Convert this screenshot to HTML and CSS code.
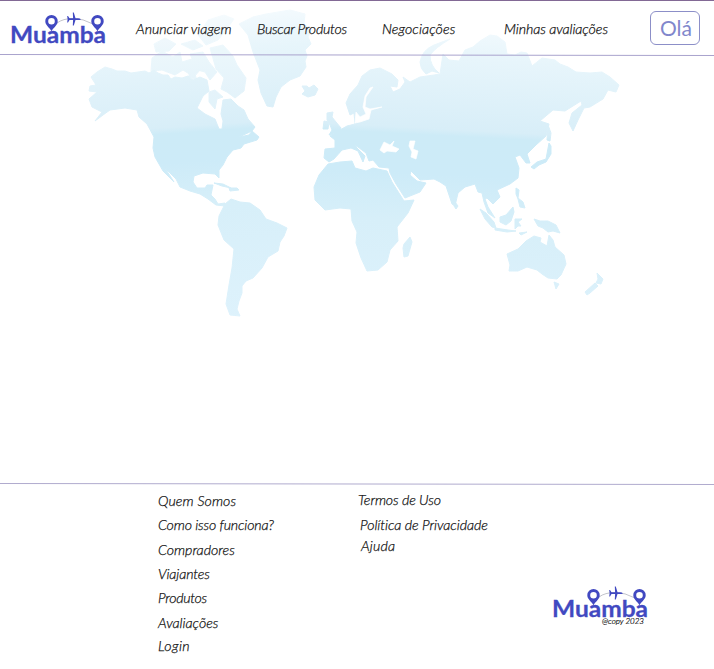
FILE: index.html
```html
<!DOCTYPE html>
<html lang="pt-BR">
<head>
<meta charset="utf-8">
<title>Muamba</title>
<link rel="stylesheet" href="styles.css">
</head>
<body>
<svg class="defs" width="0" height="0" aria-hidden="true">
  <symbol id="logo" viewBox="0 0 100 38" overflow="visible">
    <text class="wordmark" x="1" y="33" textLength="96" lengthAdjust="spacingAndGlyphs">Muamba</text>
    <path class="route" d="M48 13Q54 8.500 64 8.500T84 14"/>
    <path class="mark" fill-rule="evenodd" d="M42.500 5a6.200 6.200 0 0 1 6.200 6.200c0 4-4 6-6.200 10-2.200-4-6.200-6-6.200-10A6.200 6.200 0 0 1 42.500 5zm0 2.900a3.300 3.300 0 1 0 0 6.600 3.300 3.300 0 0 0 0-6.600zM88.500 5a6.200 6.200 0 0 1 6.200 6.200c0 4-4 6-6.200 10-2.200-4-6.200-6-6.200-10A6.200 6.200 0 0 1 88.500 5zm0 2.900a3.300 3.300 0 1 0 0 6.600 3.300 3.300 0 0 0 0-6.600z"/>
    <path class="mark" d="M72 9.200q-1-.9-3-.9h-2.500L64.800 2.500h-1l.3 5.800h-3.600L59 6h-.8l.4 3.200-.4 3.200h.8l1.500-2.300h3.600l-.3 5.400h1l1.700-5.400H69q2 0 3-.9z"/>
  </symbol>
</svg>

<div class="page">
  <svg class="map" viewBox="0 0 714 340" aria-hidden="true">
    <defs>
      <linearGradient id="west" gradientUnits="userSpaceOnUse" x1="0" y1="20" x2="22" y2="340">
        <stop offset="0" stop-color="#f6fbfe"/>
        <stop offset=".14" stop-color="#e7f5fb"/>
        <stop offset=".37" stop-color="#d8eef8"/>
        <stop offset=".39" stop-color="#cdebf7"/>
        <stop offset=".48" stop-color="#cdebf8"/>
        <stop offset=".62" stop-color="#d7eff9"/>
        <stop offset="1" stop-color="#def2fc"/>
      </linearGradient>
      <linearGradient id="east" gradientUnits="userSpaceOnUse" x1="350" y1="8" x2="333" y2="330">
        <stop offset="0" stop-color="#f6fbfe"/>
        <stop offset=".14" stop-color="#e7f5fb"/>
        <stop offset=".36" stop-color="#d8eef8"/>
        <stop offset=".38" stop-color="#cdebf7"/>
        <stop offset=".5" stop-color="#cdebf8"/>
        <stop offset=".65" stop-color="#d7eff9"/>
        <stop offset="1" stop-color="#def2fc"/>
      </linearGradient>
    </defs>
    <g class="west">
      <path d="M91 77L97 72 105 67 112 69 117 71 125 71 131 73 138 72 145 71 149 73 154 70 158 73 163 75 168 75 171 79 175 77 182 78 188 76 193 80 200 77 207 80 209 91 203 96 197 108 205 114 215 119 219 129 222 129 223 121 221 114 223 100 231 99 238 106 244 110 248 119 255 127 252 131 239 137 249 135 252 131 259 137 257 140 244 144 241 148 233 150 227 157 223 165 219 170 219 178 215 174 203 173 194 176 193 182 197 188 205 188 207 185 213 185 211 195 215 199 218 204 225 203 225 206 216 205 208 199 200 194 190 191 180 187 176 179 165 168 174 182 163 171 155 157 153 148 154 137 147 124 139 117 137 110 125 108 110 110 103 115 95 121 102 112 92 107 89 99 97 92 89 91 90 86 96 85z"/>
      <path d="M152 58l10-7 11 6 7-5 2 10 10-3 8 11-6 7-11-7-8 5-13-5-11 1zM190 54l13-2 6 10 8 10-7 8-5-8-8-2zM210 48l13-3 10 11 4 9 9 13-2 13-9 7-8-6-6-3 3-11-8-9zM154 44l11-6 11 6-7 7-13 1zM181 44l14-4 8 6-10 4zM198 35l10-15 16-5 10 4-8 11-8 10-12 5zM189 64l5 8 3 8-8-3zM209 92l6-2 8 7-6 2-2 10-6-7z" opacity=".8"/>
      <path d="M239 24L253 17 266 14 290 10 305 14 304 24 311 30 308 37 311 44 305 50 307 56 305 61 306 67 300 76 290 80 281 87 276 97 273 107 267 106 261 93 258 80 260 70 253 52 248 35z"/>
      <path d="M302 86l5 0 2 2 5-3 4 4-3 6-7 2-6-3 3-3zM214 183l9 1 8 4-9-2zM229 188l8 0 2 2-9 1z"/>
      <path d="M225 204L231 199 240 202 250 203 260 210 266 219 277 223 287 228 284 236 280 242 278 251 268 257 262 268 253 278 246 281 242 286 242 293 239 301 237 309 240 316 230 315 226 304 229 285 232 268 234 249 224 240 218 225 219 216z"/>
    </g>
    <g class="east">
      <path d="M327 113l6-1-1 5 4 5 5 6-1 4-11 3 3-5-2-5-3-5zM324 121l5 1-1 7-5 0z"/>
      <path d="M346 103L350 94 358 85 362 76 370 70 380 68 392 74 398 80 397 87 390 86 393 92 400 89 405 82 403 77 410 82 420 77 434 75 440 74 443 54 449 60 459 61 465 50 473 47 480 41 490 35 497 36 505 42 507 54 515 55 521 52 527 53 532 66 542 58 555 60 560 64 568 67 576 72 590 73 602 72 610 77 619 85 616 92 608 90 603 99 590 107 584 108 578 120 573 131 569 123 572 113 582 105 581 101 565 111 553 110 540 121 549 124 546 136 536 145 527 154 530 163 526 163 520 155 515 157 519 168 518 178 510 184 497 190 500 197 493 204 487 198 485 199 488 207 495 218 488 213 484 202 482 193 478 192 475 184 465 187 458 193 455 206 452 204 446 186 440 182 434 179 420 180 411 171 410 175 417 181 426 183 420 192 405 198 396 184 390 173 389 168 379 167 373 160 369 161 366 153 358 147 354 145 365 156 363 162 358 151 351 148 342 150 334 159 329 162 324 158 325 149 335 148 335 140 330 136 340 130 347 126 355 124 354 113 350 115z"/>
      <path d="M328 164L340 162 352 161 355 168 366 171 373 168 387 171 392 182 404 201 414 200 408 213 397 227 398 241 390 250 387 262 378 270 367 271 361 258 356 243 357 232 352 221 351 209 340 208 325 210 315 200 314 187 319 175z"/>
      <path d="M410 237l2 5-4 14-4 1-1-9 1-4zM455 202l3 4-2 3-2-3z"/>
      <path d="M420 62q2-12 14-17l16-6q-15 9-20 16 0 11 9 18l-7-2-6 3q-6-5-6-12z"/>
      <path d="M548 125l3 8-1 8-3-1zM549 143l2 3 0 8-5 8-7 3-5 4-3-2 6-5 9-3zM516 188l3 2-1 8 5 4 2 6-5-1-2-8-2-5zM480 209l6 4 8 9 2 6-4-1-7-8zM495 228l13 2 8 1-9 1-12-2zM500 217l6-2 7-8 1 5-3 9-5 4-6-3zM515 219l7 0-4 3 3 4-3 0-3 3zM534 219l6 2 8 0 8 4 4 8-7-2-5 1-5-4-5-2zM519 233l8-1-6 3z"/>
      <path d="M507 254L518 249 526 241 534 236 541 238 540 242 547 246 549 235 553 240 555 247 564 255 566 264 561 275 557 279 548 278 542 274 537 270 527 267 518 271 509 271 510 265zM554 282l5 2-3 5zM597 273l6 6-2 5-5-1 2-4zM595 283l3 3-8 7-3 2-2-3z"/>
    </g>
    <path class="water" d="M373 87L366 97 365 107 370 109 382 107 371 110 369 119 360 122 355 123 356 112 360 117 366 114 363 107 365 96 370 88zM380 150L384 142 390 145 394 141 392 146 399 149 396 152 387 151 384 153zM410 141L415 141 413 149 418 151 416 159 411 157 412 152 409 146z"/>
  </svg>

  <header class="header">
    <svg class="logo" aria-label="Muamba"><use href="#logo"/></svg>
    <nav class="nav">
      <a class="n1">Anunciar viagem</a>
      <a class="n2">Buscar Produtos</a>
      <a class="n3">Negociações</a>
      <a class="n4">Minhas avaliações</a>
    </nav>
    <button class="hello">Olá</button>
  </header>
  <svg class="rule rule-top" viewBox="0 0 714 2" aria-hidden="true"><path d="M0 .5L714 1.500"/></svg>

  <main class="content"></main>

  <svg class="rule rule-bottom" viewBox="0 0 714 2" aria-hidden="true"><path d="M0 .5L714 1.500"/></svg>
  <footer class="footer">
    <ul class="links">
      <li class="f1">Quem Somos</li>
      <li class="f2">Como isso funciona?</li>
      <li class="f3">Compradores</li>
      <li class="f4">Viajantes</li>
      <li class="f5">Produtos</li>
      <li class="f6">Avaliações</li>
      <li class="f7">Login</li>
    </ul>
    <ul class="legal">
      <li class="g1">Termos de Uso</li>
      <li class="g2">Política de Privacidade</li>
      <li class="g3">Ajuda</li>
    </ul>
    <div class="brand">
      <svg class="logo" aria-label="Muamba"><use href="#logo"/></svg>
      <small class="copy">@copy 2023</small>
    </div>
  </footer>
</div>
</body>
</html>
```
FILE: styles.css
```css
* { box-sizing: border-box; }
body { margin: 0; background: #fff; color: #111; font: italic 300 14.2px/20px Lato, "Liberation Sans", sans-serif; }
.page { position: relative; display: flex; flex-direction: column; height: 669px; overflow: hidden; }
.defs { position: absolute; }

.map { position: absolute; top: 0; left: 0; width: 714px; height: 340px; filter: blur(.6px); }
.west { fill: url(#west); stroke: url(#west); stroke-linejoin: round; }
.east { fill: url(#east); stroke: url(#east); stroke-linejoin: round; }
.water { fill: #fff; stroke: #fff; stroke-width: .7; }

.header { position: relative; display: flex; height: 54px; padding: 0 14px 0 9px; border-top: 1px solid #826995; }
.logo { display: block; flex: none; width: 100px; height: 38px; margin-top: 9px; overflow: visible; }
.wordmark { font: normal 700 23.500px/1 Lato, sans-serif; fill: #4149c1; stroke: #4149c1; stroke-width: .3; }
.mark { fill: #4149c1; }
.route { fill: none; stroke: #a7a9b5; stroke-width: .7; }
.nav { display: grid; grid-template-columns: 121px 125px 122px 1fr; flex: 1; margin: 18px 0 0 27px; white-space: nowrap; }
.nav, .links, .legal { -webkit-text-stroke: .25px #111; }
.n2 { letter-spacing: -.27px; }
.n3 { letter-spacing: .08px; }
.n4 { letter-spacing: -.07px; }
.hello { width: 50px; height: 34px; margin-top: 10px; padding: 0 0 0 2px; border: 1px solid #8c8fc8; border-radius: 6px; background: #fff; color: #8187cc; font: 21px/32px Lato, sans-serif; }

.content { flex: 1; }
.rule { position: relative; flex: none; width: 714px; height: 2px; fill: none; stroke: #a9a3cd; }
.rule-bottom { stroke: #b0abce; }

.footer { display: flex; height: 184px; padding-left: 158px; white-space: nowrap; }
ul { margin: 0; padding: 0; list-style: none; }
.links { display: grid; grid-template-rows: 24px 25px 24px 24px 25px 23px 20px; align-content: start; width: 200px; padding-top: 6px; }
.f1 { letter-spacing: .1px; }
.f2 { letter-spacing: -.15px; }
.f4 { letter-spacing: -.12px; }
.f5 { letter-spacing: -.3px; }
.f7 { letter-spacing: .4px; }
.legal { display: grid; grid-template-rows: 25px 21px 20px; align-content: start; width: 193px; padding-top: 5px; }
.g1 { letter-spacing: -.12px; }
.g2 { padding-left: 2px; letter-spacing: -.07px; }
.g3 { padding-left: 3px; letter-spacing: .2px; }
.brand { width: 100px; padding-top: 90px; }
.copy { display: block; margin: -6px 0 0 51px; font-size: 8px; line-height: 10px; -webkit-text-stroke: .2px #111; }
```
